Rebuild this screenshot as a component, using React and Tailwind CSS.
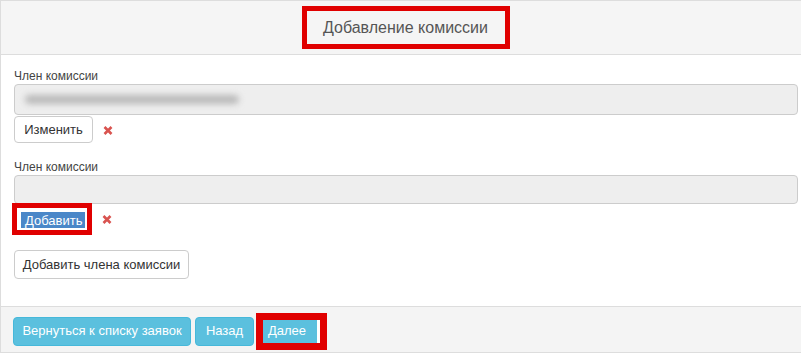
const font = {fontFamily: '"Liberation Sans", Arial, sans-serif'};

const RemoveIcon = () => (
    <svg width="10" height="9" viewBox="0 0 10 9" className="shrink-0">
        <path d="M1.5 1 L8.5 8 M8.5 1 L1.5 8" stroke="#d9534f" strokeWidth="2.6" strokeLinecap="butt"/>
    </svg>
);

const MemberField = ({blurred}) => (
    <div className="flex flex-col">
        <label className="text-[12px] leading-[14px] h-[14px] text-[#444] mb-px">Член комиссии</label>
        <div className={`flex items-center w-[784px] ${blurred ? "h-[31px]" : "h-[29px]"} bg-[#eeeeee] border border-[#cccccc] rounded-[4px] px-[10px]`}>
            {blurred && <div className="w-[214px] h-[9px] rounded-full bg-[#b9b9b9] blur-[3px]"/>}
        </div>
    </div>
);

const App = () => {
    return (
        <div style={font} className="w-[801px] h-[356px] bg-white">
            <div className="border border-[#dddddd] border-r-0">
                <div className="h-[54px] bg-[#f5f5f5] border-b border-[#dddddd] flex items-center justify-center pl-[9px]">
                    <div className="border-[5px] border-[#e00000] w-[208px] h-[43px] flex items-center justify-center bg-[#f5f5f5]">
                        <span className="text-[16px] text-[#555555]">Добавление комиссии</span>
                    </div>
                </div>

                <div className="px-[13px] pt-[14px] h-[251px]">
                    <MemberField blurred/>
                    <div className="flex items-center mt-px">
                        <button className="h-[27px] w-[79px] bg-white border border-[#cccccc] rounded-[4px] text-[13px] text-[#333]">
                            Изменить
                        </button>
                        <span className="ml-[10px] mt-[2px]"><RemoveIcon/></span>
                    </div>

                    <div className="mt-[17px]">
                        <MemberField/>
                    </div>
                    <div className="flex items-center -mt-px -ml-[2px]">
                        <div className="border-[5px] border-[#e00000] w-[80px] h-[32px] bg-white pl-[4px] pt-[4px] pr-[2px] pb-[2px]">
                            <div className="bg-[#4a87c8] w-[64px] h-[16px] flex items-center pl-[4px] text-[13px] leading-none text-white">
                                Добавить
                            </div>
                        </div>
                        <span className="ml-[10px]"><RemoveIcon/></span>
                    </div>

                    <button className="mt-[15px] h-[29px] w-[175px] bg-white border border-[#cccccc] rounded-[4px] text-[13px] text-[#333]">
                        Добавить члена комиссии
                    </button>
                </div>

                <div className="h-[46px] pt-[3px] bg-[#f4f4f4] border-t border-[#dddddd] flex items-center pl-[12px]">
                    <button className="h-[29px] w-[178px] bg-[#5bc0de] border border-[#46b8da] rounded-[4px] text-[13px] text-white">
                        Вернуться к списку заявок
                    </button>
                    <button className="ml-[4px] h-[29px] w-[59px] bg-[#5bc0de] border border-[#46b8da] rounded-[4px] text-[13px] text-white">
                        Назад
                    </button>
                    <div className="ml-[2px] border-[7px] border-[#e00000] w-[71px] h-[37px] bg-white flex">
                        <div className="bg-[#5bc0de] w-[54px] h-full flex items-center pl-[5px] text-[13px] text-white">
                            Далее
                        </div>
                    </div>
                </div>
            </div>
        </div>
    );
};

export default App;
